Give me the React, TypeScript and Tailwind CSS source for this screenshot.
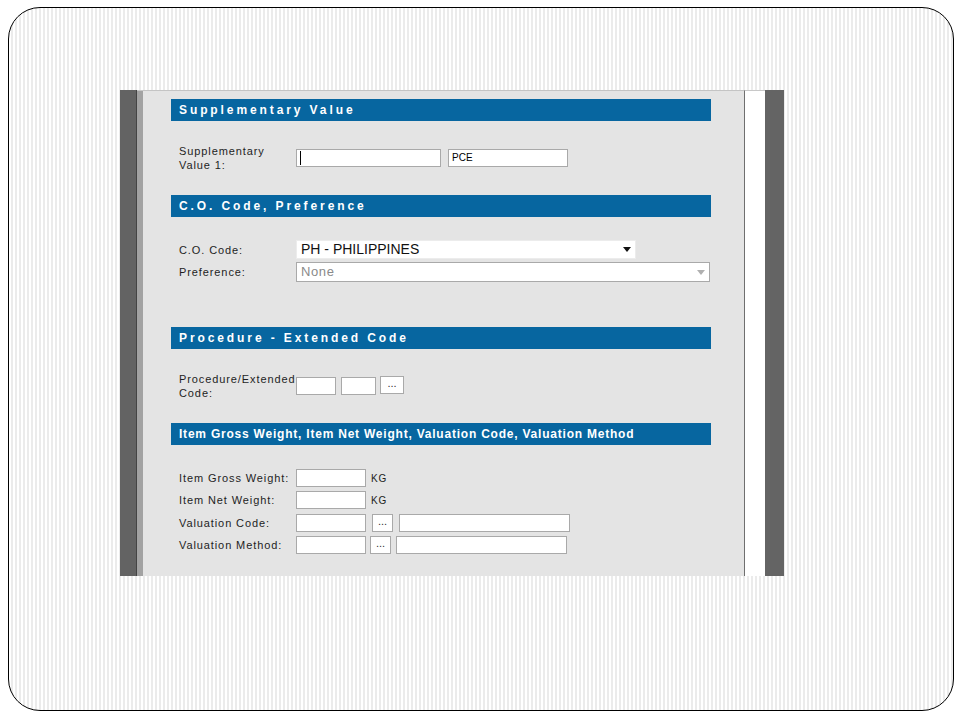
import React from "react";

const labelCls = "w-[117px] shrink-0 text-[11px] leading-[14px] tracking-[0.9px] text-[#1e1e1e]";
const boxCls = "h-[18px] shrink-0 border border-[#a9a9a9] bg-white";

const SectionHeader: React.FC<{ title: string; wide?: boolean }> = ({ title, wide }) => (
    <div
        className={`flex h-[22px] w-[540px] items-center bg-[#0766a0] pl-[8px] text-[12px] font-bold text-white ${
            wide ? "tracking-[0.78px]" : "tracking-[2.9px]"
        }`}
    >
        {title}
    </div>
);

const DotsButton: React.FC<{ w?: string }> = ({ w = "w-[21px]" }) => (
    <div
        className={`flex h-[18px] ${w} shrink-0 items-center justify-center border border-[#a9a9a9] bg-white pb-[3px] text-[11px] text-[#333]`}
    >
        ...
    </div>
);

const Arrow: React.FC<{ color: string }> = ({ color }) => (
    <svg width="8" height="5" viewBox="0 0 8 5">
        <polygon points="0,0 8,0 4,5" fill={color} />
    </svg>
);

export default function App() {
    return (
        <div className="h-[720px] w-[960px] bg-white pl-[8px] pt-[7px] font-['Liberation_Sans',Arial,sans-serif]">
            <div className="h-[704px] w-[946px] overflow-hidden rounded-[32px] border border-black bg-[repeating-linear-gradient(90deg,#ffffff_0px,#ffffff_2px,#ebebeb_2px,#ebebeb_4px)] pl-[111px] pt-[82px]">
                {/* embedded screenshot */}
                <div className="flex h-[486px] w-[664px]">
                    <div className="w-[17px] border-r border-[#444] bg-[#636363]" />
                    <div className="w-[6px] border-t border-[#c8c8c8] bg-[#a2a2a2]" />
                    <div className="w-[602px] border-r border-t border-r-[#6f6f6f] border-t-[#c4c4c4] bg-[#e4e4e4] pl-[28px] pt-[8px]">
                        <SectionHeader title="Supplementary Value" />

                        <div className="mt-[23px] flex h-[28px] items-center pl-[8px]">
                            <div className={labelCls}>
                                Supplementary
                                <br />
                                Value 1:
                            </div>
                            <div className={`${boxCls} flex w-[145px] items-center pl-[3px]`}>
                                <span className="h-[14px] w-px bg-black" />
                            </div>
                            <div className={`${boxCls} ml-[7px] w-[120px] pl-[3px] text-[10px] leading-[16px] text-black`}>
                                PCE
                            </div>
                        </div>

                        <div className="mt-[23px]">
                            <SectionHeader title="C.O. Code, Preference" />
                        </div>

                        <div className="mt-[23px] flex items-center pl-[8px]">
                            <div className={labelCls}>C.O. Code:</div>
                            <div className="flex h-[19px] w-[340px] items-center justify-between border border-[#ececec] bg-white pl-[4px] pr-[4px] text-[14px] text-[#111]">
                                <span>PH - PHILIPPINES</span>
                                <Arrow color="#111" />
                            </div>
                        </div>
                        <div className="mt-[3px] flex items-center pl-[8px]">
                            <div className={labelCls}>Preference:</div>
                            <div className="flex h-[20px] w-[414px] items-center justify-between border border-[#a9a9a9] bg-white pl-[4px] pr-[4px] text-[13px] tracking-[0.6px] text-[#8a8a8a]">
                                <span>None</span>
                                <Arrow color="#b0b0b0" />
                            </div>
                        </div>

                        <div className="mt-[45px]">
                            <SectionHeader title="Procedure - Extended Code" />
                        </div>

                        <div className="mt-[24px] flex h-[26px] items-center pl-[8px]">
                            <div className={`${labelCls} whitespace-nowrap`}>
                                Procedure/Extended
                                <br />
                                Code:
                            </div>
                            <div className={`${boxCls} w-[40px]`} />
                            <div className={`${boxCls} ml-[5px] w-[35px]`} />
                            <div className="ml-[4px] -mt-[3px]">
                                <DotsButton w="w-[24px]" />
                            </div>
                        </div>

                        <div className="mt-[24px]">
                            <SectionHeader
                                title="Item Gross Weight, Item Net Weight, Valuation Code, Valuation Method"
                                wide
                            />
                        </div>

                        <div className="mt-[24px] flex items-center pl-[8px]">
                            <div className={labelCls}>Item Gross Weight:</div>
                            <div className={`${boxCls} w-[70px]`} />
                            <span className="ml-[5px] text-[10px] tracking-[0.8px] text-[#222]">KG</span>
                        </div>
                        <div className="mt-[4px] flex items-center pl-[8px]">
                            <div className={labelCls}>Item Net Weight:</div>
                            <div className={`${boxCls} w-[70px]`} />
                            <span className="ml-[5px] text-[10px] tracking-[0.8px] text-[#222]">KG</span>
                        </div>
                        <div className="mt-[5px] flex items-center pl-[8px]">
                            <div className={labelCls}>Valuation Code:</div>
                            <div className={`${boxCls} w-[70px]`} />
                            <div className="ml-[6px]">
                                <DotsButton />
                            </div>
                            <div className={`${boxCls} ml-[6px] w-[171px]`} />
                        </div>
                        <div className="mt-[4px] flex items-center pl-[8px]">
                            <div className={labelCls}>Valuation Method:</div>
                            <div className={`${boxCls} w-[70px]`} />
                            <div className="ml-[4px]">
                                <DotsButton />
                            </div>
                            <div className={`${boxCls} ml-[5px] w-[171px]`} />
                        </div>
                    </div>
                    <div className="w-[20px] border-t border-[#c8c8c8] bg-white" />
                    <div className="w-[19px] bg-[#646464]" />
                </div>
            </div>
        </div>
    );
}
